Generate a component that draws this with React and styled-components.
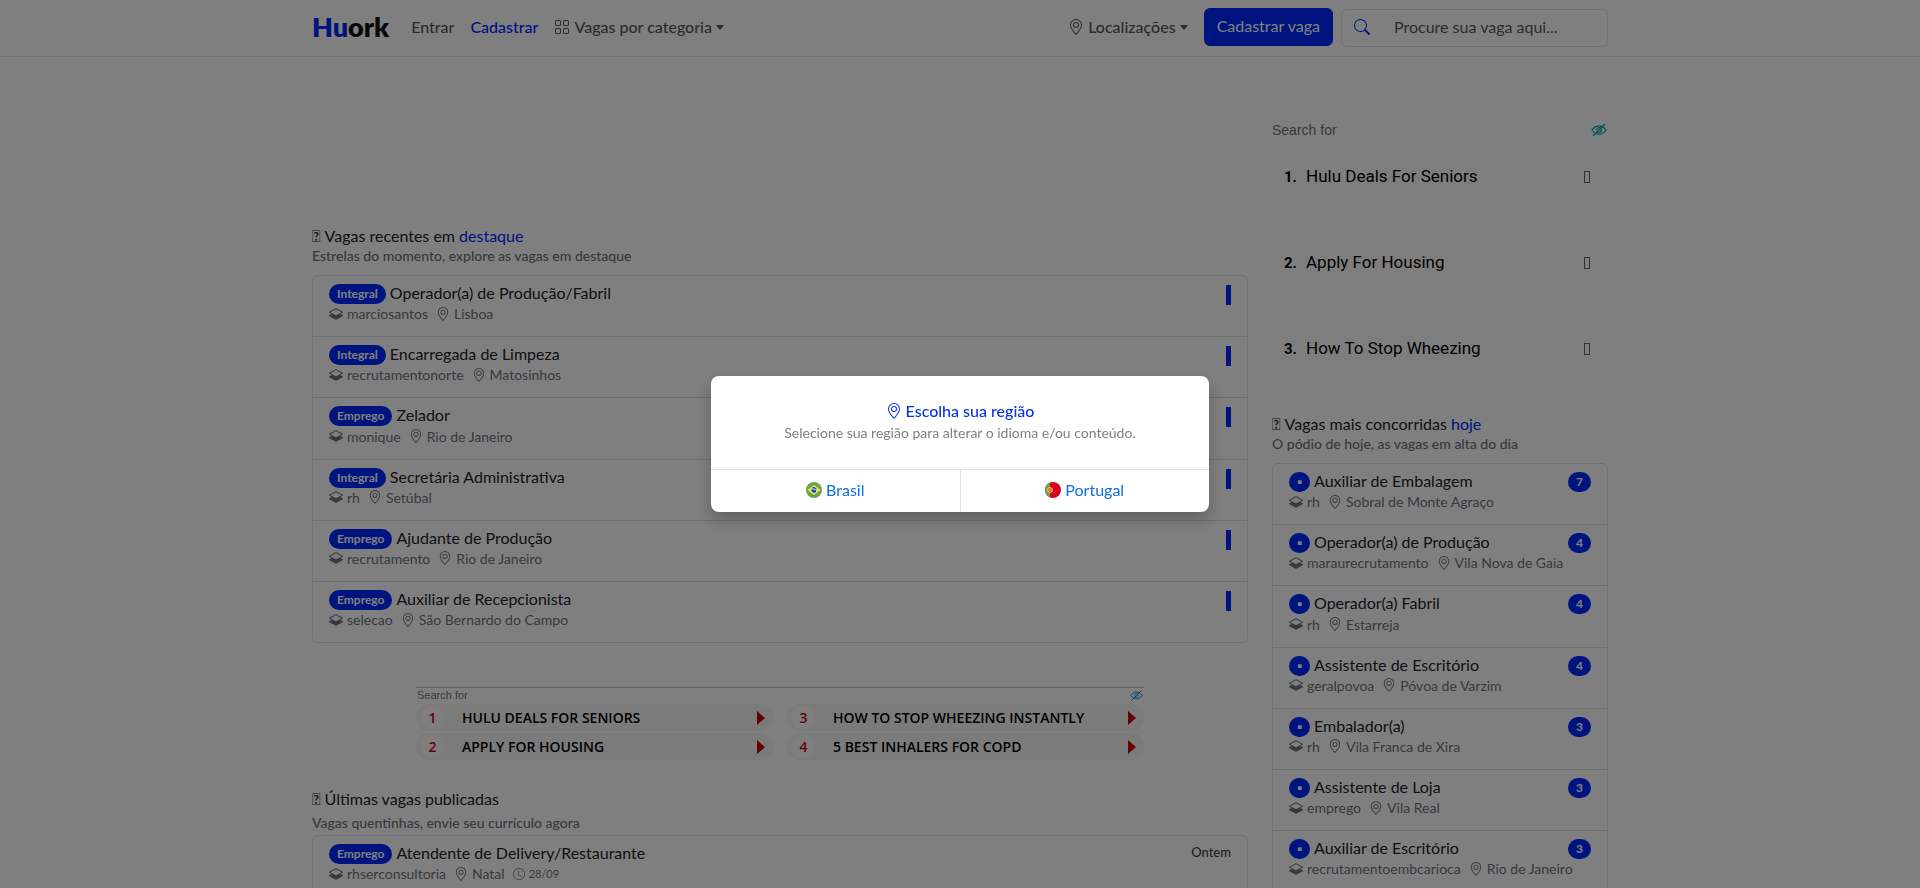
import React from 'react';
import styled, { createGlobalStyle } from 'styled-components';
import { BsClock, BsGeoAlt, BsGrid, BsLayersHalf, BsSearch } from 'react-icons/bs';

const GlobalStyle = createGlobalStyle`
  *, *::before, *::after {
    box-sizing: border-box;
  }
  html {
    overflow: hidden;
  }
  body {
    margin: 0;
    background: #fff;
    color: #212529;
    font-family: Lato, 'Liberation Sans', sans-serif;
    font-size: 16px;
    line-height: 1.5;
  }
  a {
    color: inherit;
    text-decoration: none;
  }
  button, input {
    font: inherit;
  }
  h1, h2, p, ul, ol {
    margin: 0;
    padding: 0;
    font: inherit;
    list-style: none;
  }
`;

const Wrap = styled.div`
  width: 100%;
  max-width: 1320px;
  margin: 0 auto;
  padding: 0 12px;
`;

const Header = styled.header`
  border-bottom: 1px solid #dee2e6;
`;

const Bar = styled(Wrap)`
  display: flex;
  align-items: center;
  height: 56px;
`;

const Logo = styled.a`
  margin-right: 22px;
  padding-bottom: 2px;
  font-size: 27px;
  font-weight: 800;
  line-height: 32px;
  color: #111;
  span {
    color: #0028ff;
  }
`;

const Nav = styled.nav`
  display: flex;
  flex: 1;
  align-items: center;
  gap: 16px;
`;

const NavItem = styled.a`
  padding-bottom: 2px;
  font-weight: 500;
  color: ${(props) => (props.$active ? '#0028ff' : '#595959')};
`;

const NavButton = styled.button`
  display: flex;
  align-items: center;
  gap: 4px;
  padding: 0 0 2px;
  border: 0;
  background: none;
  color: #595959;
  font-weight: 500;
  &::after {
    content: '';
    border-top: 5px solid;
    border-left: 4px solid transparent;
    border-right: 4px solid transparent;
  }
`;

const PostButton = styled.button`
  height: 38px;
  margin: 0 8px 2px 16px;
  padding: 0 12px 2px;
  border: 1px solid #0028ff;
  border-radius: 6px;
  background: #0028ff;
  color: #fff;
`;

const SearchBox = styled.form`
  display: flex;
  align-items: center;
  width: 267px;
  height: 38px;
  padding: 0 0 2px 12px;
  border: 1px solid #dee2e6;
  border-radius: 6px;
  color: #0028ff;
  svg {
    flex: none;
  }
  input {
    flex: 1;
    min-width: 0;
    padding: 0 12px 0 24px;
    border: 0;
    background: none;
    color: #212529;
  }
  input::placeholder {
    color: #595959;
    opacity: 1;
  }
`;

const Columns = styled(Wrap)`
  display: flex;
  align-items: flex-start;
  gap: 24px;
`;

const Main = styled.main`
  flex: 1;
  min-width: 0;
  padding-top: 169px;
`;

const Aside = styled.aside`
  width: 336px;
  padding-top: 61px;
`;

const SectionHead = styled.div`
  margin-bottom: ${(props) => (props.$loose ? 2 : 10)}px;
  h2 {
    line-height: 20px;
    margin-bottom: ${(props) => (props.$loose ? 3 : 0)}px;
  }
  h2 span {
    color: #0028ff;
  }
  p {
    font-size: 14px;
    font-weight: 500;
    line-height: ${(props) => (props.$loose ? 21 : 19)}px;
    color: #6c757d;
  }
`;

const List = styled.ul`
  border: 1px solid #dee2e6;
  border-radius: 6px;
`;

const Row = styled.li`
  display: flex;
  justify-content: space-between;
  padding: 7px 16px 12px;
  & + & {
    border-top: 1px solid #d6dade;
  }
`;

const Title = styled.a`
  display: flex;
  gap: 4px;
  margin-bottom: 1px;
  line-height: 1.2;
`;

const Badge = styled.span`
  align-self: flex-start;
  height: 20px;
  min-width: 21px;
  margin: 1px 0 -2px;
  padding: 0 8px;
  border-radius: 10px;
  background: #0028ff;
  color: #fff;
  font-size: 12px;
  font-weight: 700;
  line-height: 20px;
  text-align: center;
`;

const Dot = styled(Badge)`
  padding: 0 6px;
`;

const Marker = styled.span`
  width: 5px;
  height: 20px;
  margin-top: 2px;
  background: #0028ff;
`;

const Posted = styled.span`
  font-size: 13px;
  font-weight: 500;
  line-height: 18px;
  color: #444;
`;

const Meta = styled.p`
  display: flex;
  align-items: center;
  gap: 8px;
  font-size: 14px;
  line-height: 21px;
  white-space: nowrap;
  color: #6c757d;
  span {
    display: flex;
    align-items: center;
    gap: 4px;
  }
  time {
    display: flex;
    align-items: center;
    gap: 4px;
    font-size: 11px;
  }
  time svg {
    font-size: 12px;
  }
`;

// the right column is narrow, so its text block may run under the count badge
const JobText = styled.div`
  flex: 1;
  min-width: 0;
`;

const AdHead = styled.div`
  display: flex;
  align-items: center;
  justify-content: space-between;
  font-family: 'Liberation Sans', Arial, sans-serif;
  font-size: ${(props) => (props.$small ? 11 : 14)}px;
  line-height: ${(props) => (props.$small ? 14 : 24)}px;
  padding: ${(props) => (props.$small ? '0 1px' : '0 1px 0 0')};
  color: #757575;
`;

const SideAd = styled.ol`
  display: grid;
  gap: 16px;
  margin-bottom: 30px;
`;

const SideAdLink = styled.a`
  display: flex;
  align-items: center;
  height: 70px;
  padding: 0 18px 0 12px;
  background: #fcfcfc;
  color: #000;
  font-family: Roboto, sans-serif;
  font-size: 17px;
  b {
    width: 22px;
    font-size: 15px;
    font-weight: 700;
  }
  span {
    flex: 1;
  }
  &::after {
    content: '';
    width: 6px;
    height: 12px;
    border: 1px solid #666;
  }
`;

const BannerAd = styled.section`
  width: 728px;
  max-width: 100%;
  margin: 44px auto 29px;
  border-top: 1px solid #c4c4c4;
`;

const BannerGrid = styled.ol`
  display: grid;
  grid-template-rows: repeat(2, 27px);
  grid-auto-flow: column;
  grid-auto-columns: 1fr;
  gap: 2px 14px;
  padding-top: 2px;
`;

const BannerLink = styled.a`
  display: flex;
  align-items: center;
  height: 27px;
  padding: 0 8px 0 5px;
  border-radius: 13px;
  background: #f7f7f7;
  color: #000;
  font-family: 'Open Sans', sans-serif;
  font-size: 14px;
  font-weight: 600;
  b {
    width: 23px;
    margin-right: 18px;
    border-radius: 12px;
    background: #fcfcfc;
    color: #d6001c;
    font-weight: 600;
    line-height: 23px;
    text-align: center;
  }
  span {
    flex: 1;
  }
  &::after {
    content: '';
    border-left: 8px solid #c80000;
    border-top: 7px solid transparent;
    border-bottom: 7px solid transparent;
  }
`;

const Backdrop = styled.div`
  position: fixed;
  inset: 0;
  display: flex;
  align-items: center;
  justify-content: center;
  background: rgba(0, 0, 0, 0.5);
`;

const Dialog = styled.div`
  width: 498px;
  border-radius: 8px;
  background: #fff;
  box-shadow: 0 8px 16px rgba(0, 0, 0, 0.25);
  text-align: center;
`;

const DialogBody = styled.div`
  padding: 23px 24px 26px;
  h1 {
    display: flex;
    align-items: center;
    justify-content: center;
    gap: 4px;
    font-weight: 500;
    line-height: 24px;
    color: #0a32e6;
  }
  p {
    font-size: 14px;
    line-height: 20px;
    color: #7b8187;
  }
`;

const DialogActions = styled.div`
  display: flex;
  border-top: 1px solid #dee2e6;
`;

const RegionButton = styled.button`
  display: flex;
  flex: 1;
  align-items: center;
  justify-content: center;
  gap: 4px;
  height: 42px;
  padding: 0 0 2px;
  border: 0;
  background: none;
  color: #0d6fe0;
  & + & {
    border-left: 1px solid #dee2e6;
  }
`;

const featured = [
  { tag: 'Integral', title: 'Operador(a) de Produção/Fabril', user: 'marciosantos', place: 'Lisboa' },
  { tag: 'Integral', title: 'Encarregada de Limpeza', user: 'recrutamentonorte', place: 'Matosinhos' },
  { tag: 'Emprego', title: 'Zelador', user: 'monique', place: 'Rio de Janeiro' },
  { tag: 'Integral', title: 'Secretária Administrativa', user: 'rh', place: 'Setúbal' },
  { tag: 'Emprego', title: 'Ajudante de Produção', user: 'recrutamento', place: 'Rio de Janeiro' },
  { tag: 'Emprego', title: 'Auxiliar de Recepcionista', user: 'selecao', place: 'São Bernardo do Campo' },
];

const popular = [
  { title: 'Auxiliar de Embalagem', user: 'rh', place: 'Sobral de Monte Agraço', count: 7 },
  { title: 'Operador(a) de Produção', user: 'maraurecrutamento', place: 'Vila Nova de Gaia', count: 4 },
  { title: 'Operador(a) Fabril', user: 'rh', place: 'Estarreja', count: 4 },
  { title: 'Assistente de Escritório', user: 'geralpovoa', place: 'Póvoa de Varzim', count: 4 },
  { title: 'Embalador(a)', user: 'rh', place: 'Vila Franca de Xira', count: 3 },
  { title: 'Assistente de Loja', user: 'emprego', place: 'Vila Real', count: 3 },
  { title: 'Auxiliar de Escritório', user: 'recrutamentoembcarioca', place: 'Rio de Janeiro', count: 3 },
];

const latest = [
  { tag: 'Emprego', title: 'Atendente de Delivery/Restaurante', user: 'rhserconsultoria', place: 'Natal', date: '28/09', posted: 'Ontem' },
];

const sideAds = ['Hulu Deals For Seniors', 'Apply For Housing', 'How To Stop Wheezing'];

const bannerAds = [
  'HULU DEALS FOR SENIORS',
  'APPLY FOR HOUSING',
  'HOW TO STOP WHEEZING INSTANTLY',
  '5 BEST INHALERS FOR COPD',
];

const HideIcon = ({ width }) => (
  <svg width={width} height={width} viewBox="0 0 16 16" fill="none" stroke="#00a5bd" strokeWidth="1.2">
    <path d="M1 8C3 5 5.500 3.800 8 3.800S13 5 15 8C13 11 10.500 12.200 8 12.200S3 11 1 8Z" />
    <circle cx="8" cy="8" r="2.300" />
    <path d="M2 14 14 2" />
  </svg>
);

const BrazilFlag = () => (
  <svg width="16" height="16" viewBox="0 0 16 16">
    <circle cx="8" cy="8" r="8" fill="#6da544" />
    <path d="M8 3 14.500 8 8 13 1.500 8Z" fill="#ffda44" />
    <circle cx="8" cy="8" r="2.800" fill="#f0f0f0" />
    <path d="M5.300 7.400C7.500 7 9.500 7.800 10.500 9.200A2.800 2.800 0 0 1 5.300 8.600ZM5.600 6.500A2.800 2.800 0 0 1 10.800 8C9.500 6.800 7.500 6.200 5.600 6.500Z" fill="#0052b4" />
  </svg>
);

const PortugalFlag = () => (
  <svg width="16" height="16" viewBox="0 0 16 16">
    <circle cx="8" cy="8" r="8" fill="#d80027" />
    <path d="M5 .6A8 8 0 0 0 5 15.400Z" fill="#6da544" />
    <circle cx="5" cy="8" r="2.800" fill="#ffda44" />
    <path d="M3.500 6.500h3v1.800a1.500 1.500 0 0 1-3 0Z" fill="#d80027" />
    <path d="M4.400 7.300h1.200v1a.6.6 0 0 1-1.200 0Z" fill="#f0f0f0" />
  </svg>
);

const Job = ({ job, lead, children }) => (
  <Row>
    <JobText>
      <Title href="#">
        {lead}
        {job.title}
      </Title>
      <Meta>
        <span>
          <BsLayersHalf /> {job.user}
        </span>
        <span>
          <BsGeoAlt /> {job.place}
        </span>
        {job.date && (
          <time>
            <BsClock /> {job.date}
          </time>
        )}
      </Meta>
    </JobText>
    {children}
  </Row>
);

export default function App() {
  return (
    <>
      <GlobalStyle />
      <Header>
        <Bar>
          <Logo href="#">
            <span>Hu</span>ork
          </Logo>
          <Nav>
            <NavItem href="#">Entrar</NavItem>
            <NavItem href="#" $active>
              Cadastrar
            </NavItem>
            <NavButton>
              <BsGrid /> Vagas por categoria
            </NavButton>
          </Nav>
          <NavButton>
            <BsGeoAlt /> Localizações
          </NavButton>
          <PostButton>Cadastrar vaga</PostButton>
          <SearchBox>
            <BsSearch />
            <input type="search" aria-label="Procurar vaga" placeholder="Procure sua vaga aqui..." />
          </SearchBox>
        </Bar>
      </Header>

      <Columns>
        <Main>
          <SectionHead>
            <h2>
              {'\uf8fe'} Vagas recentes em <span>destaque</span>
            </h2>
            <p>Estrelas do momento, explore as vagas em destaque</p>
          </SectionHead>
          <List>
            {featured.map((job) => (
              <Job key={job.title} job={job} lead={<Badge>{job.tag}</Badge>}>
                <Marker />
              </Job>
            ))}
          </List>

          <BannerAd>
            <AdHead $small>
              Search for <HideIcon width={13} />
            </AdHead>
            <BannerGrid>
              {bannerAds.map((text, i) => (
                <li key={text}>
                  <BannerLink href="#">
                    <b>{i + 1}</b>
                    <span>{text}</span>
                  </BannerLink>
                </li>
              ))}
            </BannerGrid>
          </BannerAd>

          <SectionHead $loose>
            <h2>{'\uf8fe'} Últimas vagas publicadas</h2>
            <p>Vagas quentinhas, envie seu currículo agora</p>
          </SectionHead>
          <List>
            {latest.map((job) => (
              <Job key={job.title} job={job} lead={<Badge>{job.tag}</Badge>}>
                <Posted>{job.posted}</Posted>
              </Job>
            ))}
          </List>
        </Main>

        <Aside>
          <AdHead>
            Search for <HideIcon width={16} />
          </AdHead>
          <SideAd>
            {sideAds.map((text, i) => (
              <li key={text}>
                <SideAdLink href="#">
                  <b>{i + 1}.</b>
                  <span>{text}</span>
                </SideAdLink>
              </li>
            ))}
          </SideAd>
          <SectionHead>
            <h2>
              {'\uf8fe'} Vagas mais concorridas <span>hoje</span>
            </h2>
            <p>O pódio de hoje, as vagas em alta do dia</p>
          </SectionHead>
          <List>
            {popular.map((job) => (
              <Job key={job.title} job={job} lead={<Dot>▪</Dot>}>
                <Badge>{job.count}</Badge>
              </Job>
            ))}
          </List>
        </Aside>
      </Columns>

      <Backdrop>
        <Dialog role="dialog" aria-modal="true" aria-labelledby="region-title">
          <DialogBody>
            <h1 id="region-title">
              <BsGeoAlt /> Escolha sua região
            </h1>
            <p>Selecione sua região para alterar o idioma e/ou conteúdo.</p>
          </DialogBody>
          <DialogActions>
            <RegionButton>
              <BrazilFlag /> Brasil
            </RegionButton>
            <RegionButton>
              <PortugalFlag /> Portugal
            </RegionButton>
          </DialogActions>
        </Dialog>
      </Backdrop>
    </>
  );
}
